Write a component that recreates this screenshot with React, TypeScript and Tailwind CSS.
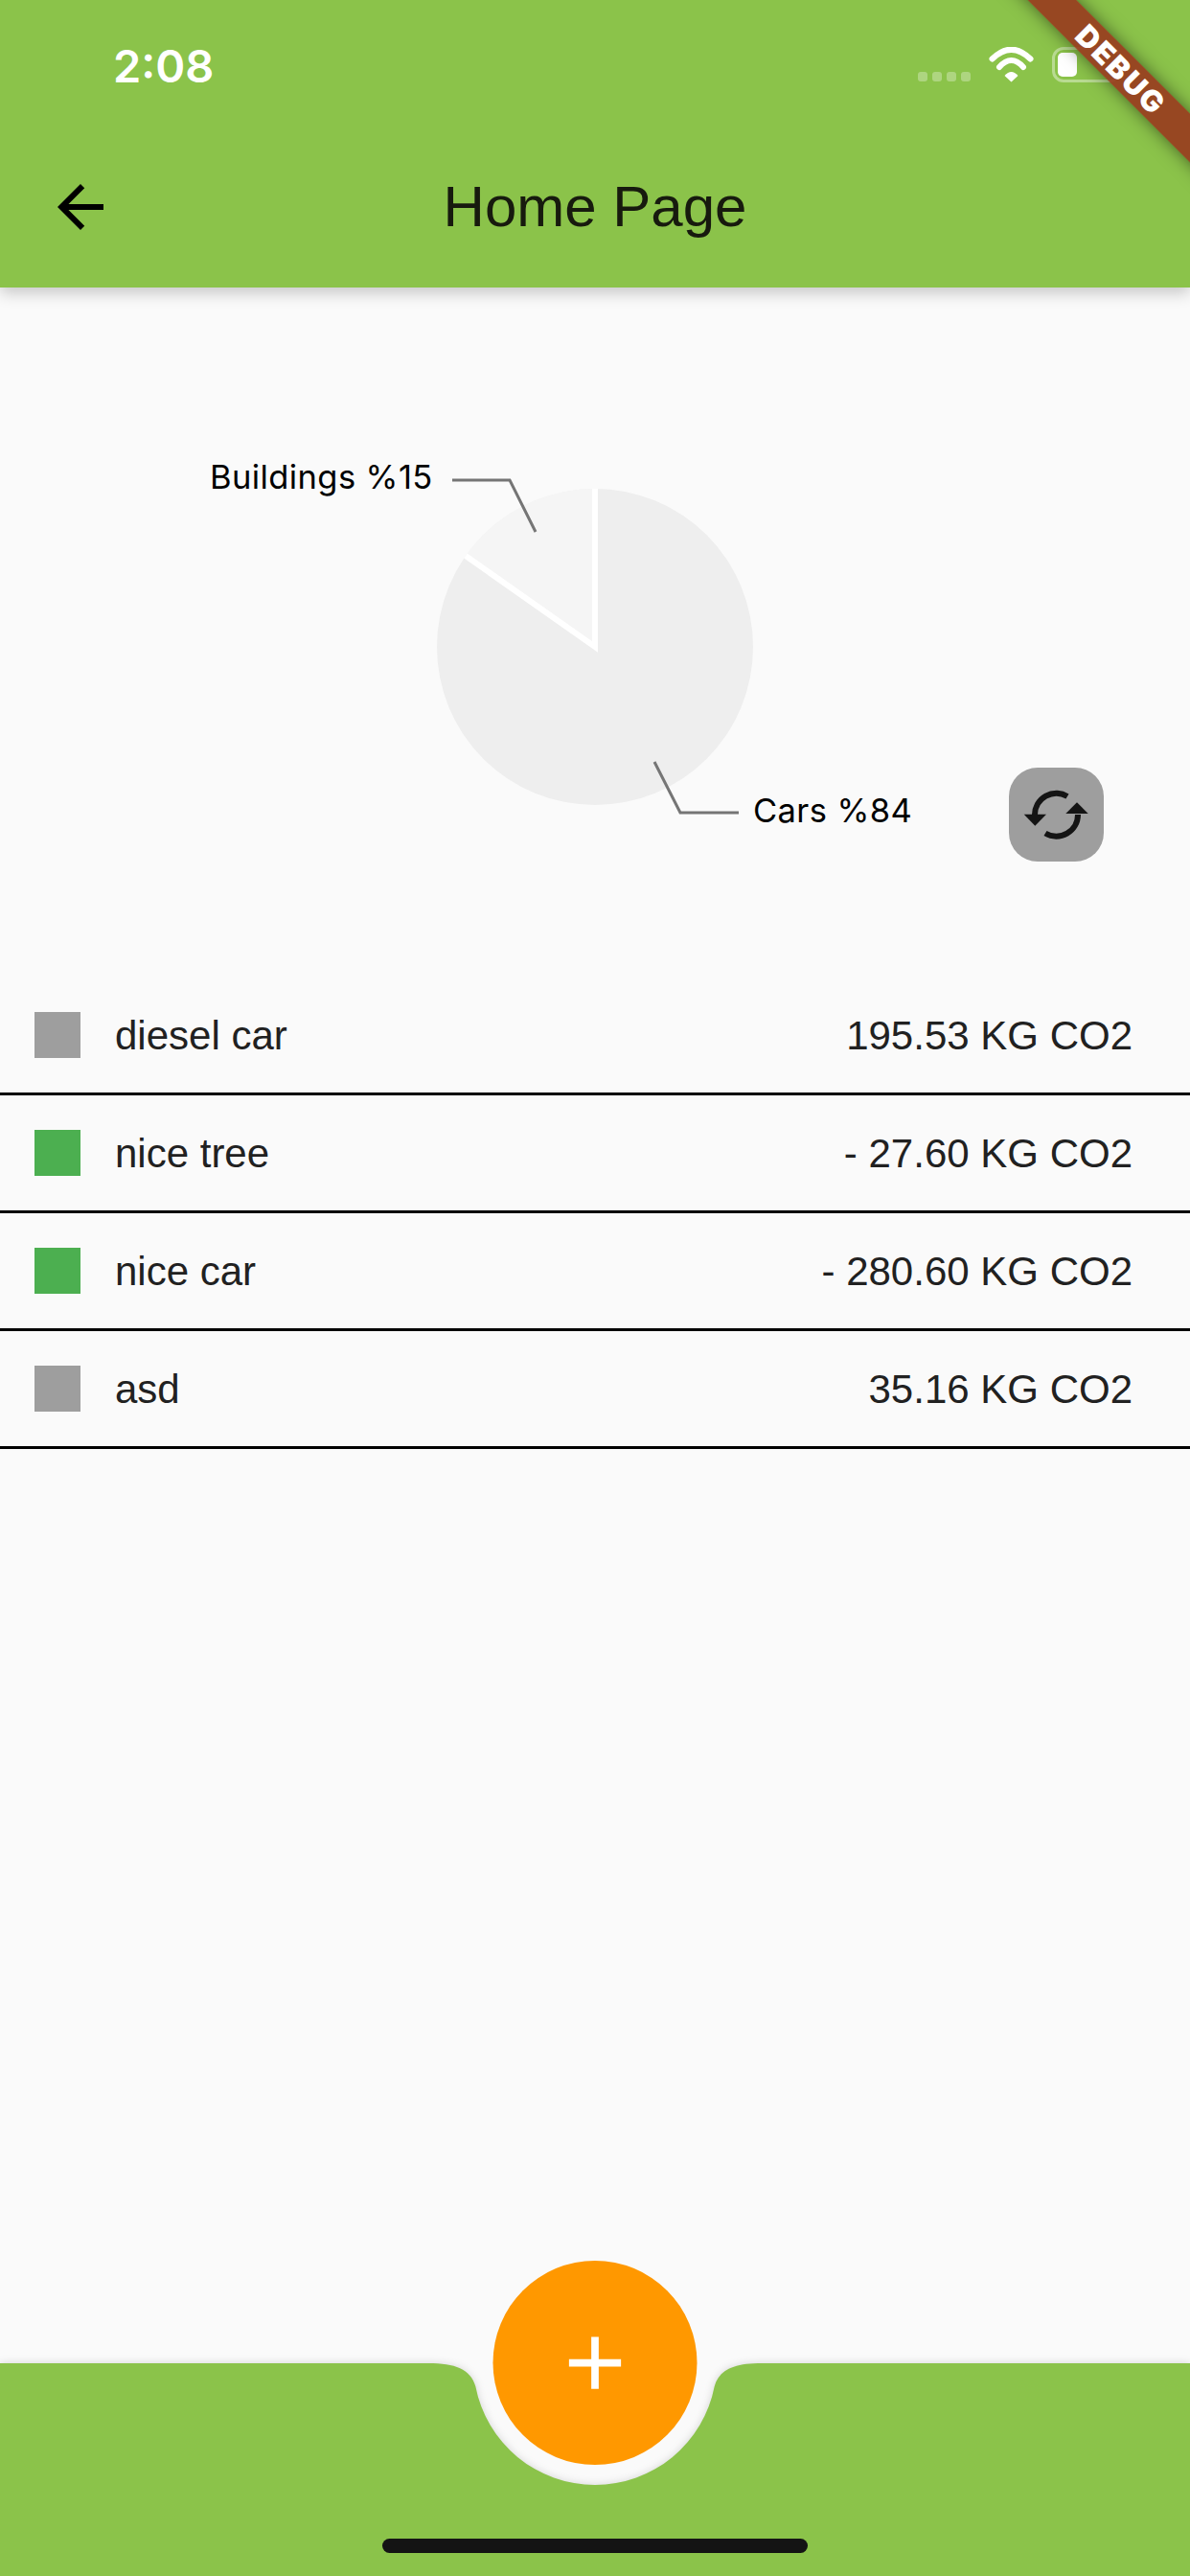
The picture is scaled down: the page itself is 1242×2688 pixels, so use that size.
import React from "react";

const rows = [
  { name: "diesel car", value: "195.53 KG CO2", color: "bg-[#9e9e9e]" },
  { name: "nice tree", value: "- 27.60 KG CO2", color: "bg-[#4caf50]" },
  { name: "nice car", value: "- 280.60 KG CO2", color: "bg-[#4caf50]" },
  { name: "asd", value: "35.16 KG CO2", color: "bg-[#9e9e9e]" },
];

function StatusBar() {
  return (
    <div className="flex h-[132px] items-start justify-between pl-[118px] pr-[72px] pt-[49px]">
      <span className="mt-[2px] font-['Inter',sans-serif] text-[47px] font-semibold leading-[36px] text-white">2:08</span>
      <div className="flex items-end gap-[19px]">
        <div className="mb-px flex gap-[5px]">
          <div className="h-[10px] w-[10px] rounded-[3px] bg-white/30" />
          <div className="h-[10px] w-[10px] rounded-[3px] bg-white/30" />
          <div className="h-[10px] w-[10px] rounded-[3px] bg-white/30" />
          <div className="h-[10px] w-[10px] rounded-[3px] bg-white/30" />
        </div>
        <svg width="47" height="37" viewBox="0 0 47 37" fill="none">
          <path d="M3.5 12.5 Q23.5 -7 43.5 12.5" stroke="white" strokeWidth="6" strokeLinecap="round" />
          <path d="M11 21 Q23.5 7 36 21" stroke="white" strokeWidth="6" strokeLinecap="round" />
          <path d="M16.5 30 Q23.5 22 30.5 30 L23.5 36.5 Z" fill="white" />
        </svg>
        <div className="flex h-[37px] w-[72px] items-start rounded-[12px] border-[3px] border-white/40 pl-[3px] pt-[3px]">
          <div className="h-[25px] w-[20px] rounded-[5px] bg-white" />
        </div>
      </div>
    </div>
  );
}

function Chart() {
  return (
    <svg width="1242" height="720" viewBox="0 300 1242 720" className="block">
      <circle cx="621" cy="675" r="165" fill="#eeeeee" />
      <path d="M621 675 L621 510 A165 165 0 0 0 486 580 Z" fill="#f5f5f5" />
      <path d="M621 510 L621 675 L486 580" fill="none" stroke="white" strokeWidth="6" />
      <path d="M472 501 H532 L559 555" fill="none" stroke="#757575" strokeWidth="3" />
      <path d="M683 795 L710 848 H771" fill="none" stroke="#757575" strokeWidth="3" />
      <text x="219" y="510" fill="black" className="font-['Inter',sans-serif] text-[34.5px] tracking-[0.4px]">Buildings %15</text>
      <text x="786" y="858" fill="black" className="font-['Inter',sans-serif] text-[34.5px] tracking-[0.4px]">Cars %84</text>
    </svg>
  );
}

function SyncIcon() {
  return (
    <svg width="70" height="52" viewBox="0 0 70 52" fill="none">
      <path d="M46 7 A22.5 22.5 0 0 0 12 26" stroke="#141414" strokeWidth="6" />
      <path d="M23 45.500 A22.5 22.5 0 0 0 57 26" stroke="#141414" strokeWidth="6" />
      <path d="M0.7 25.700 H24 L12.300 37.700 Z" fill="#141414" />
      <path d="M44.300 25 H67.700 L56 13.300 Z" fill="#141414" />
    </svg>
  );
}

export default function App() {
  return (
    <div className="relative flex h-[2688px] w-[1242px] flex-col overflow-hidden bg-[#fafafa] font-['Liberation_Sans',Arial,sans-serif]">
      <header className="relative z-10 h-[300px] bg-[#8bc34a] shadow-[0_6px_15px_rgba(0,0,0,0.2)]">
        <StatusBar />
        <div className="relative flex h-[168px] items-center justify-center">
          <svg width="72" height="72" viewBox="0 0 24 24" className="absolute left-[48px] top-[48px]" fill="black">
            <path d="M20 11H7.830l5.590-5.590L12 4l-8 8 8 8 1.410-1.410L7.830 13H20v-2z" />
          </svg>
          <h1 className="text-[60px] font-normal leading-none text-[#171a0e]">Home Page</h1>
        </div>
      </header>

      <main className="flex flex-1 flex-col">
        <section className="relative h-[720px]">
          <Chart />
          <button className="absolute left-[1053px] top-[501px] flex h-[98px] w-[99px] items-center justify-center rounded-[30px] bg-[#9e9e9e]">
            <SyncIcon />
          </button>
        </section>
        <ul>
          {rows.map((r) => (
            <li key={r.name} className="flex h-[123px] items-center gap-9 border-b-[3px] border-black pl-9 pr-[60px] text-[42px] text-[#212121]">
              <div className={`h-12 w-12 ${r.color}`} />
              <span className="flex-1">{r.name}</span>
              <span>{r.value}</span>
            </li>
          ))}
        </ul>
      </main>

      <footer className="relative h-[222px]">
        <svg width="1242" height="222" viewBox="0 0 1242 222" className="absolute inset-0 overflow-visible drop-shadow-[0_0_4px_rgba(0,0,0,0.15)]">
          <path d="M0 0 H447 C475 0 491 6 496.300 24 A127 127 0 0 0 745.700 24 C751 6 767 0 795 0 H1242 V222 H0 Z" fill="#8bc34a" />
        </svg>
        <button className="absolute left-1/2 top-[-107px] flex h-[213px] w-[213px] -translate-x-1/2 items-center justify-center rounded-full bg-[#ff9800]">
          <svg width="93" height="93" viewBox="0 0 24 24" fill="white">
            <path d="M19 13h-6v6h-2v-6H5v-2h6V5h2v6h6v2z" />
          </svg>
        </button>
        <div className="absolute bottom-[24px] left-1/2 h-[15px] w-[444px] -translate-x-1/2 rounded-full bg-[#141414]" />
      </footer>

      <div className="absolute right-[-127px] top-[53px] z-20 flex h-[36px] w-[400px] rotate-45 items-center justify-center bg-[#983a1e]/90 pl-[4px] shadow-[0_0_18px_rgba(0,0,0,0.5)]">
        <span className="font-['Inter',sans-serif] text-[31px] font-black leading-none tracking-[2px] text-white">DEBUG</span>
      </div>
    </div>
  );
}
